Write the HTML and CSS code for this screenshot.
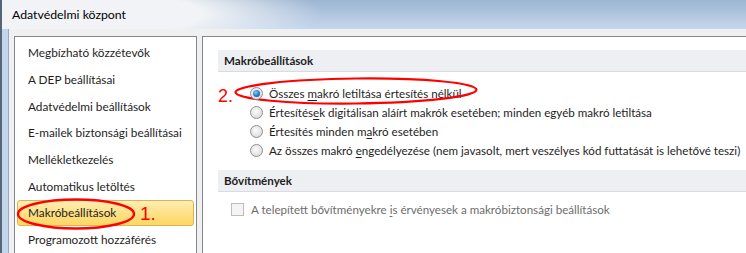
FILE: index.html
```html
<!DOCTYPE html>
<html lang="hu">
<head>
  <meta charset="UTF-8">
  <meta name="viewport" content="width=device-width, initial-scale=1.0">
  <title>Adatvédelmi központ</title>
  <link rel="stylesheet" href="styles.css">
</head>
<body>

  <div class="window">
    <div class="titlebar">Adatvédelmi központ</div>

    <div class="client">
      <!-- Bal oldali menü -->
      <ul class="nav">
        <li>Megbízható közzétevők</li>
        <li>A DEP beállításai</li>
        <li>Adatvédelmi beállítások</li>
        <li>E-mailek biztonsági beállításai</li>
        <li>Mellékletkezelés</li>
        <li>Automatikus letöltés</li>
        <li class="selected">
          Makróbeállítások
          <svg class="mark mark-nav" width="122" height="36" viewBox="0 0 122 36">
            <ellipse cx="60" cy="18" rx="58" ry="14.5" fill="none" stroke="#f00" stroke-width="2.4"/>
          </svg>
          <span class="step step-nav">1.</span>
        </li>
        <li>Programozott hozzáférés</li>
      </ul>

      <!-- Jobb oldali tartalom -->
      <div class="content">
        <div class="section-head">Makróbeállítások</div>
        <ul class="options">
          <li>
            <span class="step step-opt">2.</span>
            <svg class="mark mark-opt" width="246" height="30" viewBox="0 0 246 30">
              <ellipse cx="123" cy="15" rx="120.5" ry="12.5" fill="none" stroke="#f00" stroke-width="2.2" transform="rotate(-0.6 123 15)"/>
            </svg>
            <span class="radio on"></span>
            <span class="label">Összes <u>m</u>akró letiltása értesítés nélkül</span>
          </li>
          <li>
            <span class="radio"></span>
            <span class="label">Értesítés<u>e</u>k digitálisan aláírt makrók esetében; minden egyéb makró letiltása</span>
          </li>
          <li>
            <span class="radio"></span>
            <span class="label">Értesítés minden m<u>a</u>kró esetében</span>
          </li>
          <li>
            <span class="radio"></span>
            <span class="label">Az összes makró <u>e</u>ngedélyezése (nem javasolt, mert veszélyes kód futtatását is lehetővé teszi)</span>
          </li>
        </ul>

        <div class="section-head">Bővítmények</div>
        <div class="check-row disabled">
          <span class="checkbox"></span>
          <span class="label">A telepített bővítményekre <u>i</u>s érvényesek a makróbiztonsági beállítások</span>
        </div>
      </div>
    </div>
  </div>

</body>
</html>
```

FILE: styles.css
```css
/* Alap */
body {
  margin: 0;
  padding: 0;
  width: 746px;
  height: 253px;
  overflow: hidden;
  font-family: Lato, "Liberation Sans", sans-serif;
  font-size: 11.6px;
  color: #1e1e1e;
}
ul {
  list-style: none;
  margin: 0;
  padding: 0;
}
u {
  text-decoration-thickness: 1px;
  text-underline-offset: 2px;
}

/* Ablakkeret */
.window {
  width: 780px;
  height: 300px;
  border-left: 2px solid #56657a;
  background: #c3d5ea;
}
.titlebar {
  height: 29px;
  line-height: 29px;
  padding-left: 10px;
  font-size: 12.3px;
  color: #000;
  background:
    radial-gradient(ellipse 240px 44px at 80px 14px, rgba(241,243,246,1) 50%, rgba(241,243,246,0) 100%),
    linear-gradient(#9db5d1, #c4d7ec);
}
.client {
  display: flex;
  gap: 5px;
  margin-left: 6px;
  height: 271px;
  padding: 7px 0 0 5px;
  border-left: 1px solid #9aa9bb;
  background: #f0f0f0;
}

/* Menü */
.nav {
  width: 181px;
  flex: none;
  padding-top: 2px;
  border: 1px solid #828790;
  background: #fff;
  font-size: 11.8px;
}
.nav li {
  position: relative;
  display: flex;
  align-items: center;
  height: 25.667px;
  margin: 1px 2px;
  padding-left: 10px;
  border: 1px solid transparent;
  border-radius: 3px;
  box-sizing: border-box;
}
.nav li.selected {
  border-color: #dcb34f;
  background: linear-gradient(#fdeeb4, #fde28a 45%, #fcd764);
}

/* Piros jelölések */
.mark {
  position: absolute;
  pointer-events: none;
}
.mark-nav {
  left: -2px;
  top: -4.5px;
}
.step {
  position: absolute;
  font-family: "Liberation Sans", Arial, sans-serif;
  color: #f00;
}
.step-nav {
  left: 122px;
  top: 3px;
  font-size: 19px;
  line-height: 19px;
}

/* Tartalom */
.content {
  flex: 1;
  padding: 13px 0 0 15px;
  border: 1px solid #828790;
  background: #fff;
}
.section-head {
  height: 21px;
  line-height: 21px;
  padding-left: 6px;
  font-weight: bold;
  background: #eeeff3;
  border-bottom: 1px solid #d9dbe0;
}
.options {
  margin: 11.5px 0 10.5px;
  padding-left: 32px;
}
.options li {
  position: relative;
  display: flex;
  align-items: center;
  height: 19px;
  white-space: nowrap;
}
.label {
  white-space: pre;
}
.step-opt {
  left: -32px;
  top: 3px;
  font-size: 18px;
  line-height: 18px;
}
.mark-opt {
  left: -17px;
  top: -8px;
}

/* Rádiógombok */
.radio {
  position: relative;
  width: 13px;
  height: 13px;
  margin-right: 6px;
  flex: none;
  box-sizing: border-box;
  border: 1px solid #8f9090;
  border-radius: 50%;
  background: radial-gradient(circle at 45% 40%, #fbfbfb 0, #e6e6e6 55%, #cdcdcd 100%);
}
.radio.on::after {
  content: "";
  position: absolute;
  left: 2px;
  top: 2px;
  width: 7px;
  height: 7px;
  border-radius: 50%;
  background: radial-gradient(circle at 40% 35%, #8fd0f7 0, #2b86cf 45%, #0c4382 100%);
}

/* Jelölőnégyzet */
.check-row {
  display: flex;
  align-items: center;
  height: 19px;
  margin-top: 8px;
  padding-left: 13px;
  white-space: nowrap;
}
.check-row.disabled {
  color: #6d6d6d;
}
.checkbox {
  width: 13px;
  height: 13px;
  margin-right: 7px;
  flex: none;
  box-sizing: border-box;
  border: 1px solid #bdbdbd;
  background: #f4f4f4;
}
```
